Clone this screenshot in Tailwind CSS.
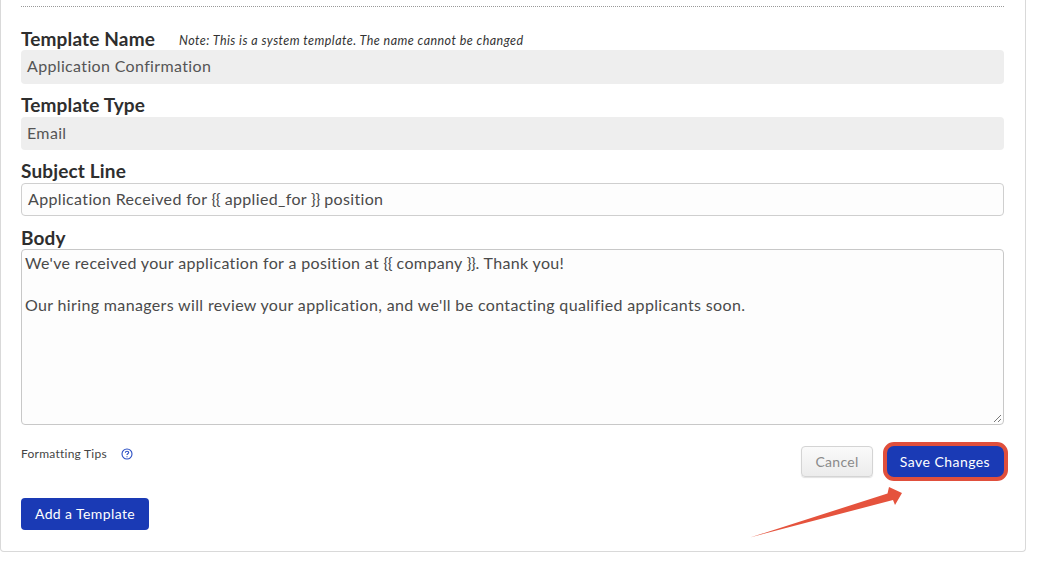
<!DOCTYPE html>
<html lang="en">
<head>
  <meta charset="UTF-8">
  <title>Template</title>
  <script src="https://cdn.jsdelivr.net/npm/@tailwindcss/browser@4"></script>
</head>
<body class="bg-white h-[572px] overflow-hidden relative font-['Lato','Open_Sans',sans-serif] text-[#333]">
  <!-- card, top edge runs off the screenshot -->
  <div class="w-[1026px] h-[552px] border border-t-0 border-[#d9d9d9] rounded-b-[4px] px-[20px] pt-[6px]">
    <div class="border-t border-dotted border-[#999] w-[983px]"></div>

    <div class="w-[983px] pt-[22px]">
      <div class="flex items-baseline h-[21px] leading-[20px]">
        <span class="text-[19px] tracking-[0.15px] font-bold text-[#2e2e2e]">Template Name</span>
        <span class="ml-[24px] text-[12.5px] tracking-[0.45px] italic text-[#333] relative top-[-1px]">Note: This is a system template. The name cannot be changed</span>
      </div>
      <div class="h-[34px] bg-[#eeeeee] rounded-[4px] px-[6px] pb-[2px] flex items-center text-[16px] tracking-[0.35px] text-[#555]">Application Confirmation</div>

      <div class="mt-[12px] h-[21px] leading-[18px] text-[19px] tracking-[0.15px] font-bold text-[#2e2e2e]">Template Type</div>
      <div class="h-[33px] bg-[#eeeeee] rounded-[4px] px-[6px] pb-[2px] flex items-center text-[16px] tracking-[0.35px] text-[#555]">Email</div>

      <div class="mt-[12px] h-[21px] leading-[18px] text-[19px] tracking-[0.15px] font-bold text-[#2e2e2e]">Subject Line</div>
      <div class="h-[33px] bg-[#fdfdfd] border border-[#cfcfcf] rounded-[4px] px-[6px] pb-[1px] flex items-center text-[16px] tracking-[0.35px] text-[#4a4a4a]">
        <span>Application Received for <span class="tracking-[-0.5px]">{{</span> applied_for <span class="tracking-[-0.5px]">}}</span> position</span>
      </div>

      <div class="mt-[12px] h-[21px] leading-[20px] text-[19px] tracking-[0.15px] font-bold text-[#2e2e2e]">Body</div>
      <div class="relative h-[176px] bg-[#fdfdfd] border border-[#c8c8c8] rounded-[4px] px-[3px] pt-[2px] text-[16px] tracking-[0.35px] leading-[21px] text-[#4a4a4a]">
        <p>We've received your application for a position at <span class="tracking-[-0.5px]">{{</span> company <span class="tracking-[-0.5px]">}}</span>. Thank you!</p>
        <p class="mt-[21px]">Our hiring managers will review your application, and we'll be contacting qualified applicants soon.</p>
        <svg class="absolute right-[1px] bottom-[1px]" width="9" height="9" viewBox="0 0 9 9" fill="none" stroke="#777" stroke-width="1">
          <path d="M1 8 8 1M5 8 8 5"/>
        </svg>
      </div>

      <div class="flex justify-between mt-[18px] h-[38px]">
        <div class="flex items-start text-[12px] tracking-[0.25px] leading-[20px] pt-[1px] text-[#444]">
          <span>Formatting Tips</span>
          <svg class="ml-[14px] mt-[4px]" width="12" height="12" viewBox="0 0 12 12" fill="none" stroke="#2a4fc4" stroke-width="1.1">
            <circle cx="6" cy="6" r="5"/>
            <path d="M4.3 4.7C4.4 3.6 5.1 3.2 6 3.2c1 0 1.7.6 1.7 1.4 0 1.2-1.7 1.2-1.7 2.5"/>
            <path d="M6 8.2v1"/>
          </svg>
        </div>
        <div class="flex items-start pt-[3px]">
          <button class="w-[72px] h-[31px] pb-[1px] rounded-[4px] border border-[#d4d4d4] bg-gradient-to-b from-[#fafafa] to-[#ececec] text-[14px] tracking-[0.3px] text-[#8a8a8a] shadow-[0_1px_1px_rgba(0,0,0,0.12)]">Cancel</button>
          <button class="ml-[13px] w-[118px] h-[32px] pb-[2px] rounded-[5px] bg-[#1a3ab5] text-[14px] tracking-[0.45px] text-white">Save Changes</button>
        </div>
      </div>

      <button class="mt-[17px] w-[128px] h-[32px] pb-[1px] rounded-[4px] bg-[#1a3ab5] text-[14px] tracking-[0.4px] text-white">Add a Template</button>
    </div>
  </div>

  <!-- screenshot annotation -->
  <div class="absolute left-[883px] top-[442px] w-[125px] h-[39px] border-[4px] border-[#e04f3c] rounded-[11px]"></div>
  <svg class="absolute left-[750px] top-[485px]" width="156" height="55" viewBox="750 485 156 55">
    <path d="M750 537.5 887.5 493.5 889 487 902 493 895 505 893 500Z" fill="#e5533d"/>
  </svg>
</body>
</html>
